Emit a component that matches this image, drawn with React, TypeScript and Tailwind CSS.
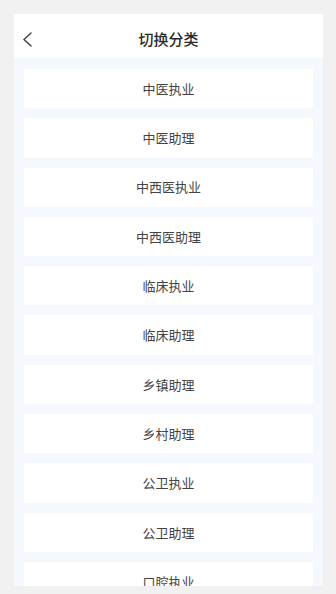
const items = [
  '中医执业',
  '中医助理',
  '中西医执业',
  '中西医助理',
  '临床执业',
  '临床助理',
  '乡镇助理',
  '乡村助理',
  '公卫执业',
  '公卫助理',
  '口腔执业',
]

export default function App() {
  return (
    <div className="h-[594px] w-[336px] overflow-hidden bg-[#f1f1f1] pt-[14px] pl-[14px] pr-[13px] font-['Noto_Sans_CJK_SC',sans-serif]">
      <div className="flex h-[572px] flex-col overflow-hidden bg-[#f5f8fd]">
        <div className="relative flex h-[44px] shrink-0 items-center justify-center bg-white pt-[7px]">
          <svg
            className="absolute left-[8px] top-[18px]"
            width="12"
            height="15"
            viewBox="0 0 12 15"
            fill="none"
            stroke="#444"
            strokeWidth="1.5"
            strokeLinecap="round"
            strokeLinejoin="round"
          >
            <polyline points="9,1 2,7.5 9,14" />
          </svg>
          <h1 className="text-[15px] font-medium text-[#2a2a2a]">切换分类</h1>
        </div>
        <div className="flex flex-col gap-[10px] px-[10px] pt-[11px]">
          {items.map((name) => (
            <div
              key={name}
              className="flex h-[39.3px] shrink-0 items-center justify-center bg-white text-[13px] text-[#444]"
            >
              {name}
            </div>
          ))}
        </div>
      </div>
    </div>
  )
}
